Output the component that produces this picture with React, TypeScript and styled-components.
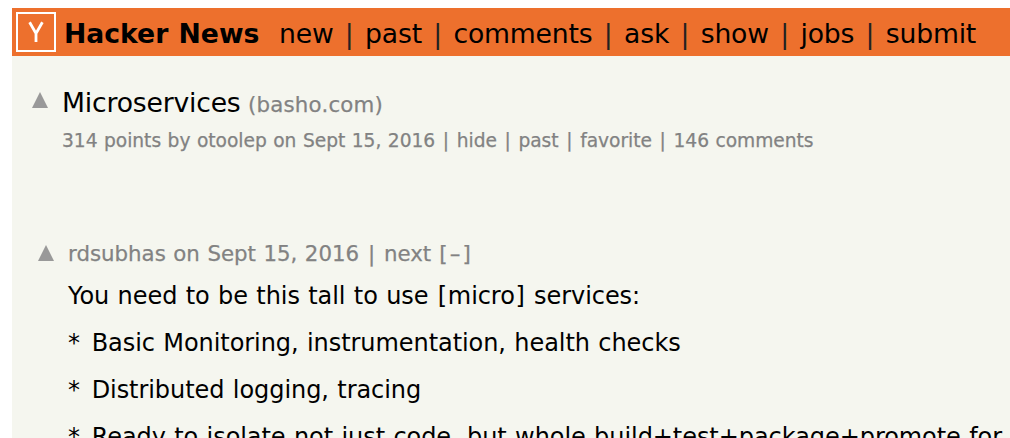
import React, { Fragment } from "react";
import styled, { createGlobalStyle } from "styled-components";

const Global = createGlobalStyle`
  body { margin: 0; background: #fff; overflow: hidden; font-family: Verdana, "DejaVu Sans", sans-serif; }
`;
const Page = styled.div`
  box-sizing: border-box;
  height: 438px;
  overflow: hidden;
  padding: 8px 0 0 12px;
`;
const Sheet = styled.main`
  background: #f5f6ef;
  height: 430px;
  overflow: hidden;
`;
const Bar = styled.header`
  height: 48px;
  background: #ed702d;
  display: flex;
  align-items: center;
  padding-left: 4px;
`;
const Logo = styled.svg`
  width: 40px;
  height: 40px;
  flex: none;
`;
const Text = styled.span`
  display: block;
  white-space: pre;
  flex: none;
  word-spacing: 0.034em;
`;
const Glyph = styled.span<{ $w: number; $color?: string; $align?: string }>`
  display: inline-block;
  width: ${(p) => p.$w}em;
  color: ${(p) => p.$color ?? "inherit"};
  text-align: ${(p) => p.$align ?? "center"};
  letter-spacing: 0;
`;
const Brand = styled(Text)`
  font-size: 26.67px;
  line-height: 44px;
  padding-top: 4px;
  font-weight: bold;
  margin-left: 8px;
  width: 195px;
`;
const Nav = styled(Text)`
  font-size: 26.67px;
  line-height: 44px;
  padding-top: 4px;
  margin-left: 20px;
  letter-spacing: -0.2px;
  word-spacing: 0.055em;
`;
const Row = styled.div`
  display: flex;
  align-items: baseline;
  height: 36px;
`;
const Story = styled.section`
  padding: 29px 0 0 20px;
  height: 141px;
  box-sizing: border-box;
`;
const Arrow = styled.svg<{ $top: number }>`
  width: 16px;
  height: 16px;
  flex: none;
  align-self: flex-start;
  margin-top: ${(p) => p.$top}px;
`;
const Title = styled(Text)`
  font-size: 26.67px;
  line-height: 36px;
  margin-left: 14px;
  width: 178px;
  letter-spacing: -0.2px;
`;
const Muted = styled(Text)`
  color: #828282;
  -webkit-text-stroke: 0.25px #828282;
`;
const Site = styled(Muted)`
  font-size: 21.33px;
  margin-left: 8px;
  letter-spacing: 0.2px;
`;
const Sub = styled(Muted)`
  font-size: 18.67px;
  line-height: 36px;
  margin: 2px 0 0 30px;
  letter-spacing: -0.04px;
`;
const Comment = styled.section`
  padding: 44px 0 0 26px;
`;
const Head = styled(Muted)`
  font-size: 21.33px;
  margin-left: 14px;
`;
const Body = styled.div`
  margin: -4px 0 0 30px;
`;
const Para = styled(Text)`
  font-size: 24px;
  line-height: 47px;
  letter-spacing: -0.06px;
`;

const Divided = ({ items, color }: { items: string[]; color?: string }) => (
  <>
    {items.map((item, i) => (
      <Fragment key={item}>
        {i > 0 && <> <Glyph $w={0.4546} $color={color}>|</Glyph> </>}
        {item}
      </Fragment>
    ))}
  </>
);

const Vote = ({ top }: { top: number }) => (
  <Arrow viewBox="0 0 16 16" $top={top}>
    <path d="M8 0L16 16H0Z" fill="#999" />
  </Arrow>
);

const Bullet = () => <Glyph $w={0.636} $align="left">*</Glyph>;

export default function App() {
  return (
    <Page>
      <Global />
      <Sheet>
        <Bar>
          <Logo viewBox="0 0 40 40">
            <rect x="1" y="1" width="38" height="38" fill="none" stroke="#fff" strokeWidth="2" />
            <path d="M13.6 10.2L20 21.5L26.4 10.2M20 20.5V30" fill="none" stroke="#fff" strokeWidth="2.8" />
          </Logo>
          <Brand>Hacker News</Brand>
          <Nav><Divided items={["new", "past", "comments", "ask", "show", "jobs", "submit"]} color="#222" /></Nav>
        </Bar>
        <Story>
          <Row>
            <Vote top={7} />
            <Title>Microservices</Title>
            <Site>(basho.com)</Site>
          </Row>
          <Sub><Divided items={["314 points by otoolep on Sept 15, 2016", "hide", "past", "favorite", "146 comments"]} /></Sub>
        </Story>
        <Comment>
          <Row>
            <Vote top={4} />
            <Head>
              <Divided items={["rdsubhas on Sept 15, 2016", "next "]} />
              <Glyph $w={0.4546}>[</Glyph><Glyph $w={0.636}>–</Glyph><Glyph $w={0.4546}>]</Glyph>
            </Head>
          </Row>
          <Body>
            <Para>You need to be this tall to use <Glyph $w={0.4546}>[</Glyph>micro<Glyph $w={0.4546}>]</Glyph> services:</Para>
            <Para><Bullet /> Basic Monitoring, instrumentation, health checks</Para>
            <Para><Bullet /> Distributed logging, tracing</Para>
            <Para><Bullet /> Ready to isolate not just code, but whole build+test+package+promote for</Para>
          </Body>
        </Comment>
      </Sheet>
    </Page>
  );
}
